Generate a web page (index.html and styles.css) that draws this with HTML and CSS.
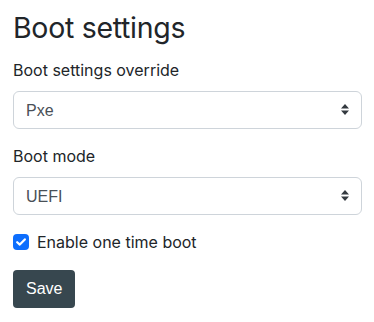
FILE: index.html
```html
<!DOCTYPE html>
<html lang="en">
<head>
    <meta charset="UTF-8">
    <meta name="viewport" content="width=device-width, initial-scale=1.0">
    <title>Boot settings</title>
    <link rel="stylesheet" href="styles.css">
</head>
<body>
    <div class="panel">
        <h2 class="title">Boot settings</h2>

        <div class="field">
            <label class="field-label" for="override">Boot settings override</label>
            <div class="select-wrap">
                <select id="override" class="select">
                    <option>Pxe</option>
                    <option>Hdd</option>
                    <option>Cd</option>
                </select>
                <svg class="select-arrow" width="8" height="11" viewBox="0 0 8 11">
                    <path d="M4 0 L8 4.5 H0 Z M0 6.5 H8 L4 11 Z" fill="#343a40"/>
                </svg>
            </div>
        </div>

        <div class="field">
            <label class="field-label" for="mode">Boot mode</label>
            <div class="select-wrap">
                <select id="mode" class="select">
                    <option>UEFI</option>
                    <option>Legacy</option>
                </select>
                <svg class="select-arrow" width="8" height="11" viewBox="0 0 8 11">
                    <path d="M4 0 L8 4.5 H0 Z M0 6.5 H8 L4 11 Z" fill="#343a40"/>
                </svg>
            </div>
        </div>

        <label class="check">
            <span class="check-box">
                <svg width="10" height="8" viewBox="0 0 10 8">
                    <path d="M1.2 4.2 L3.8 6.6 L8.8 1.4" fill="none" stroke="#fff" stroke-width="2.2" stroke-linecap="round" stroke-linejoin="round"/>
                </svg>
            </span>
            <span class="check-text">Enable one time boot</span>
        </label>

        <button class="btn-save" type="button">Save</button>
    </div>
</body>
</html>
```

FILE: styles.css
```css
body {
    margin: 0;
    background: #ffffff;
    font-family: Inter, "Noto Sans", sans-serif;
    color: #212529;
}

.panel {
    padding: 11px 12px 0 13px;
}

.title {
    font-size: 28.5px;
    font-weight: 400;
    line-height: 1.2;
    margin: 0 0 13px 0;
    color: #212529;
    letter-spacing: -0.3px;
}

.field {
    margin-bottom: 15px;
}

.field-label {
    display: block;
    font-size: 16px;
    line-height: 24px;
    margin-bottom: 9px;
}

.select-wrap {
    position: relative;
}

.select {
    display: block;
    width: 100%;
    height: 38px;
    padding: 0 36px 0 12px;
    font-family: "Liberation Sans", Arial, sans-serif;
    font-size: 16px;
    color: #495057;
    background: #fff;
    border: 1px solid #ced4da;
    border-radius: 6px;
    appearance: none;
    -webkit-appearance: none;
    box-sizing: border-box;
}

/* arrows drawn over the select */
.select-arrow {
    position: absolute;
    right: 13px;
    top: 13px;
    pointer-events: none;
}

.check {
    display: flex;
    align-items: center;
    gap: 8px;
    margin-top: 6px;
    margin-bottom: 16px;
}

.check-box {
    width: 16px;
    height: 16px;
    border-radius: 4px;
    background: #0d6efd;
    display: flex;
    align-items: center;
    justify-content: center;
}

.check-text {
    font-size: 16px;
    line-height: 24px;
}

.btn-save {
    display: block;
    height: 38px;
    padding: 0 13px;
    font-family: "Liberation Sans", Arial, sans-serif;
    font-size: 16px;
    color: #ffffff;
    background: #37474f;
    border: none;
    border-radius: 4px;
}
```
